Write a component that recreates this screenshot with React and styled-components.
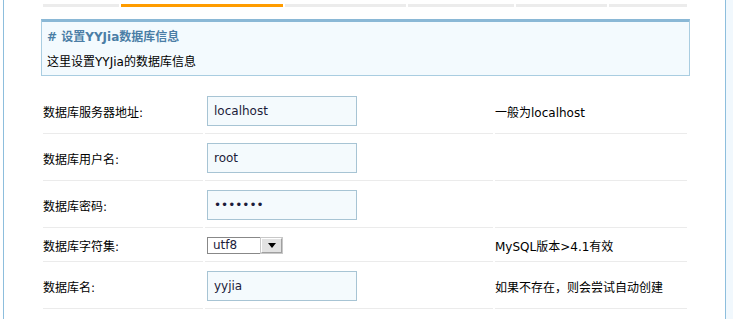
import React from 'react';
import styled, { createGlobalStyle } from 'styled-components';

const GlobalStyle = createGlobalStyle`
  html, body {
    margin: 0;
    padding: 0;
    background: #ffffff;
    font-family: "DejaVu Sans", "Noto Sans CJK SC", sans-serif;
    font-size: 12px;
    color: #000;
  }
`;

const Shell = styled.div`
  display: flex;
  height: 319px;
  overflow: hidden;
`;

const Gutter = styled.div`
  width: 3px;
  flex: none;
`;

const Main = styled.div`
  width: 721px;
  flex: none;
  border-left: 1px solid #8dbedd;
  border-right: 1px solid #8dbedd;
  background: #fff;
  padding-top: 4px;
`;

const SideFill = styled.div`
  flex: 1;
  background: #f1f8fd;
`;

const Tabs = styled.div`
  display: flex;
  gap: 2px;
  margin-left: 39px;
`;

const Tab = styled.div`
  width: ${p => p.$w}px;
  height: 3px;
  background: ${p => (p.$active ? '#ff9c00' : '#ececec')};
`;

const InfoBox = styled.div`
  margin: 12px 0 0 37px;
  width: 637px;
  padding: 0 5px 3px;
  background: #f3fafe;
  border: 1px solid #a9cde1;
  border-top: 3px solid #8ab8d6;
`;

const InfoTitle = styled.div`
  height: 30px;
  line-height: 30px;
  font-weight: bold;
  color: #4b7ea6;
`;

const InfoText = styled.div`
  height: 20px;
  line-height: 20px;
`;

const Form = styled.div`
  display: grid;
  grid-template-columns: 160px 288px 192px;
  column-gap: 2px;
  row-gap: 2px;
  margin: 13px 0 0 39px;
`;

const Cell = styled.div`
  height: ${p => (p.$short ? 31 : 44)}px;
  border-bottom: 1px solid #ebebeb;
  display: flex;
  align-items: center;
  padding-left: ${p => p.$pad || 0}px;
`;

const TextInput = styled.input`
  box-sizing: border-box;
  width: 150px;
  height: 30px;
  border: 1px solid #a7c4d4;
  background: #f4fafd;
  padding: 0 6px;
  font-family: "DejaVu Sans", sans-serif;
  font-size: 12px;
  color: #1c1c3a;
  outline: none;
`;

const Select = styled.div`
  box-sizing: border-box;
  width: 76px;
  height: 17px;
  border: 1px solid #888;
  background: #fff;
  display: flex;
  align-items: stretch;
  font-family: "DejaVu Sans", sans-serif;
  font-size: 12px;
  color: #1c1c3a;
`;

const SelectValue = styled.span`
  flex: 1;
  line-height: 15px;
  padding-left: 5px;
`;

const SelectButton = styled.span`
  box-sizing: border-box;
  width: 21px;
  border: 1px solid #fff;
  border-right-color: #a0a0a0;
  border-bottom-color: #a0a0a0;
  background: #e2e2e2;
  display: flex;
  align-items: center;
  justify-content: center;
  outline: 1px solid #c8c8c8;
`;

const Arrow = styled.span`
  width: 0;
  height: 0;
  border-left: 4px solid transparent;
  border-right: 4px solid transparent;
  border-top: 5px solid #000;
`;

const rows = [
  { label: '数据库服务器地址:', field: <TextInput defaultValue="localhost" />, hint: '一般为localhost' },
  { label: '数据库用户名:', field: <TextInput defaultValue="root" />, hint: '' },
  { label: '数据库密码:', field: <TextInput type="password" defaultValue="1234567" />, hint: '' },
  {
    label: '数据库字符集:',
    short: true,
    field: (
      <Select>
        <SelectValue>utf8</SelectValue>
        <SelectButton><Arrow /></SelectButton>
      </Select>
    ),
    hint: 'MySQL版本>4.1有效',
  },
  { label: '数据库名:', field: <TextInput defaultValue="yyjia" />, hint: '如果不存在，则会尝试自动创建' },
];

const tabs = [76, 162, 121, 106, 91, 78];

export default function App() {
  return (
    <>
      <GlobalStyle />
      <Shell>
        <Gutter />
        <Main>
          <Tabs>
            {tabs.map((w, i) => (
              <Tab key={i} $w={w} $active={i === 1} />
            ))}
          </Tabs>
          <InfoBox>
            <InfoTitle># 设置YYJia数据库信息</InfoTitle>
            <InfoText>这里设置YYJia的数据库信息</InfoText>
          </InfoBox>
          <Form>
            {rows.map(r => (
              <React.Fragment key={r.label}>
                <Cell $short={r.short}>{r.label}</Cell>
                <Cell $short={r.short} $pad={2}>{r.field}</Cell>
                <Cell $short={r.short}>{r.hint}</Cell>
              </React.Fragment>
            ))}
          </Form>
        </Main>
        <SideFill />
      </Shell>
    </>
  );
}
